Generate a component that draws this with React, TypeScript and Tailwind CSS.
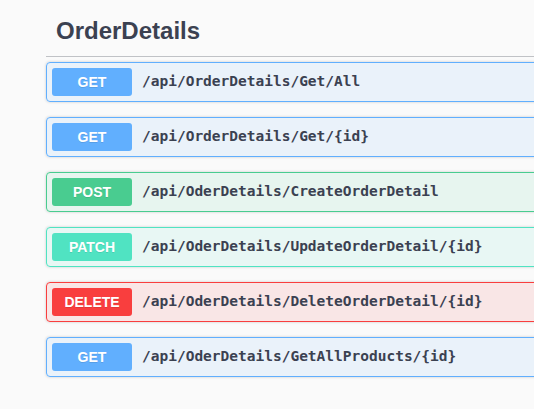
const endpoints = [
  { method: "GET", path: "/api/OrderDetails/Get/All" },
  { method: "GET", path: "/api/OrderDetails/Get/{id}" },
  { method: "POST", path: "/api/OderDetails/CreateOrderDetail" },
  { method: "PATCH", path: "/api/OderDetails/UpdateOrderDetail/{id}" },
  { method: "DELETE", path: "/api/OderDetails/DeleteOrderDetail/{id}" },
  { method: "GET", path: "/api/OderDetails/GetAllProducts/{id}" },
];

const styles: Record<string, { row: string; badge: string }> = {
  GET: {
    row: "border-[#61affe] bg-[rgba(97,175,254,0.1)]",
    badge: "bg-[#61affe]",
  },
  POST: {
    row: "border-[#49cc90] bg-[rgba(73,204,144,0.1)]",
    badge: "bg-[#49cc90]",
  },
  PATCH: {
    row: "border-[#50e3c2] bg-[rgba(80,227,194,0.1)]",
    badge: "bg-[#50e3c2]",
  },
  DELETE: {
    row: "border-[#f93e3e] bg-[rgba(249,62,62,0.1)]",
    badge: "bg-[#f93e3e]",
  },
};

function Endpoint({ method, path }: { method: string; path: string }) {
  const s = styles[method];
  return (
    <div
      className={`flex h-[40px] items-center rounded-[4px] border px-[5px] shadow-[0_0_3px_rgba(0,0,0,0.19)] ${s.row}`}
    >
      <span
        className={`flex h-[28px] w-[80px] items-center justify-center rounded-[3px] font-['Liberation_Sans',Arial,sans-serif] text-[14px] font-bold text-white [text-shadow:0_1px_0_rgba(0,0,0,0.1)] ${s.badge}`}
      >
        {method}
      </span>
      <span className="pl-[10px] font-['DejaVu_Sans_Mono',monospace] text-[14.5px] font-bold text-[#3b4151]">
        {path}
      </span>
    </div>
  );
}

function SectionHeading({ title }: { title: string }) {
  return (
    <h4 className="border-b border-[rgba(59,65,81,0.3)] pt-[13px] pb-[7px] pl-[10px] font-['Liberation_Sans',Arial,sans-serif] text-[24px] leading-[36px] font-bold text-[#3b4151]">
      {title}
    </h4>
  );
}

export default function App() {
  return (
    <div className="h-[409px] w-[534px] overflow-hidden bg-[#fafafa]">
      <div className="w-[600px] pl-[46px]">
        <section className="pb-[9px]">
          <SectionHeading title="OrderDetails" />
          <div className="mt-[5px] flex flex-col gap-[15px] pb-[15px]">
            {endpoints.map((e, i) => (
              <Endpoint key={i} method={e.method} path={e.path} />
            ))}
          </div>
        </section>
        <section>
          <SectionHeading title="Products" />
        </section>
      </div>
    </div>
  );
}
